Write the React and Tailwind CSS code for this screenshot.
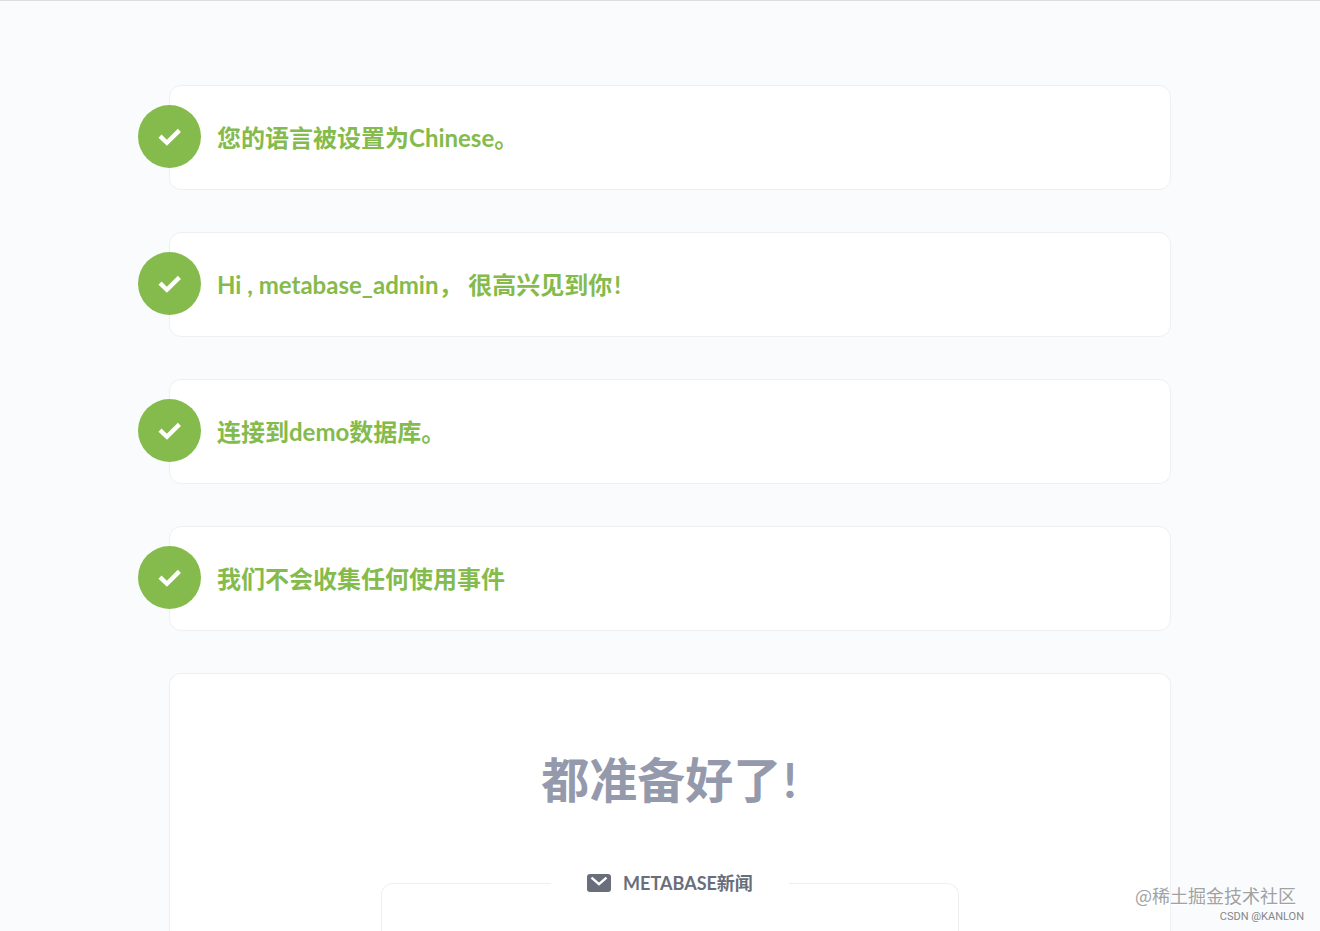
import React from 'react';

// Exclamation mark with the extra room that CJK text leaves around it
const Bang = () => <span className="px-0.5">!</span>;

const steps = [
    { id: 'language', title: '您的语言被设置为Chinese。' },
    { id: 'user', title: <>Hi , metabase_admin， 很高兴见到你<Bang /></> },
    { id: 'database', title: '连接到demo数据库。' },
    { id: 'tracking', title: '我们不会收集任何使用事件' },
];

const CheckIcon = () => (
    <svg viewBox="0 0 24 18" className="h-[18px] w-6" fill="none" aria-hidden="true">
        <path d="M2 8.2 L8.9 14.8 L21.4 2.4" stroke="#fff" strokeWidth="4.4" />
    </svg>
);

const MailIcon = () => (
    <svg viewBox="0 0 24 18" className="h-[18px] w-6" fill="none" aria-hidden="true">
        <rect width="24" height="18" rx="3" fill="#696e7b" />
        <path d="M4.5 3.6 L12 10.2 L19.5 3.6" stroke="#fff" strokeWidth="2.4" />
    </svg>
);

// A finished setup step, collapsed to its title
const InactiveStep = ({ title }) => (
    <section className="flex h-[105px] shrink-0 items-center gap-4 rounded-xl border border-[#edf0f1] bg-white">
        <div className="mb-0.5 -ml-8 flex size-[63px] shrink-0 items-center justify-center rounded-full bg-[#84bb4c]">
            <CheckIcon />
        </div>
        <h2 className="text-2xl font-bold text-[#84bb4c]">{title}</h2>
    </section>
);

const CompletedStep = () => (
    <section className="flex flex-1 flex-col items-center rounded-t-xl border border-b-0 border-[#edf0f1] bg-white px-6 pt-[72px]">
        <h1 className="text-5xl leading-[68px] font-bold text-[#949aab]">都准备好了<Bang /></h1>
        <fieldset className="mt-[55px] w-full max-w-[578px] flex-1 rounded-t-xl border border-b-0 border-[#edf0f1]">
            <legend className="mx-auto flex h-7 items-center gap-3 px-9 text-lg font-bold text-[#696e7b]">
                <MailIcon />
                METABASE新闻
            </legend>
        </fieldset>
    </section>
);

const Watermark = () => (
    <div className="absolute right-4 bottom-1 flex flex-col items-end text-right">
        <span className="mr-2 font-['Noto_Sans_CJK_SC',sans-serif] text-lg leading-6 text-[#a0a2a4] [text-shadow:1px_1px_0_#fff]">
            @稀土掘金技术社区
        </span>
        <span className="font-['Roboto',sans-serif] text-[11px] leading-5 text-[#85878a]">
            CSDN @KANLON
        </span>
    </div>
);

const App = () => {
    return (
        <div className="relative flex h-screen flex-col overflow-hidden border-t border-[#dcdddf] bg-[#f9fbfc] font-['Lato','Noto_Sans_CJK_SC',sans-serif]">
            <main className="flex flex-1 justify-center pt-[84px] pr-8 pl-[52px]">
                <div className="flex w-full max-w-[1002px] flex-col gap-[42px]">
                    {steps.map((step) => (
                        <InactiveStep key={step.id} title={step.title} />
                    ))}
                    <CompletedStep />
                </div>
            </main>
            <Watermark />
        </div>
    );
};

export default App;
